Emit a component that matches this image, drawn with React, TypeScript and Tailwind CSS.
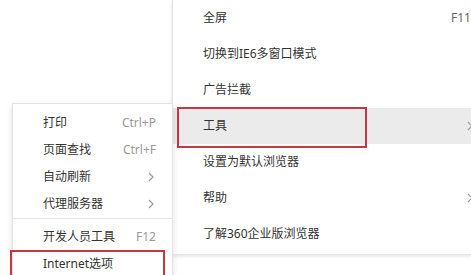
import React from "react";

const font = { fontFamily: '"Noto Sans", "Noto Sans CJK SC", sans-serif' };

function Chevron() {
  return (
    <svg width="6" height="10" viewBox="0 0 6 10" className="shrink-0">
      <polyline points="1,1 5,5 1,9" fill="none" stroke="#9a9a9a" strokeWidth="1.2" />
    </svg>
  );
}

type Item = { label: string; right?: string; arrow?: boolean; hover?: boolean; boxed?: boolean };

const mainItems: Item[] = [
  { label: "全屏", right: "F11" },
  { label: "切换到IE6多窗口模式" },
  { label: "广告拦截" },
  { label: "工具", arrow: true, hover: true, boxed: true },
  { label: "设置为默认浏览器" },
  { label: "帮助", arrow: true },
  { label: "了解360企业版浏览器" },
];

export default function App() {
  return (
    <div className="relative w-[471px] h-[275px] overflow-hidden bg-white text-[12px] text-[#333]" style={font}>
      {/* main menu */}
      <div className="absolute left-[172px] top-0 w-[320px] bg-white border-l border-[#e3e3e3] pb-[2px] shadow-[0_2px_4px_rgba(0,0,0,0.12)]">
        {mainItems.map((it) => (
          <div
            key={it.label}
            className={`relative flex items-center h-[36px] pl-[30px] pr-[24px] ${it.hover ? "bg-[#ebebeb]" : ""}`}
          >
            <span className="flex-1 leading-none">{it.label}</span>
            {it.right && <span className="text-[#666] leading-none mr-[-3px]">{it.right}</span>}
            {it.arrow && <span className="mr-[-5px] flex"><Chevron /></span>}
            {it.boxed && (
              <div className="absolute left-[4px] top-[-1px] w-[190px] h-[41px] border-2 border-[#c63740]" />
            )}
          </div>
        ))}
      </div>

      {/* submenu */}
      <div className="absolute left-[12px] top-[103px] w-[161px] bg-white border border-[#e3e3e3] pt-[5px] shadow-[0_2px_6px_rgba(0,0,0,0.12)]">
        {[
          { label: "打印", right: "Ctrl+P" },
          { label: "页面查找", right: "Ctrl+F" },
          { label: "自动刷新", arrow: true },
          { label: "代理服务器", arrow: true },
        ].map((it: Item) => (
          <div key={it.label} className="flex items-center h-[27px] pl-[30px] pr-[16px]">
            <span className="flex-1 leading-none">{it.label}</span>
            {it.right && <span className="text-[#999] leading-none">{it.right}</span>}
            {it.arrow && <span className="mr-[2px] flex"><Chevron /></span>}
          </div>
        ))}
        <div className="mt-[1px] mb-[4px] h-px bg-[#e6e6e6]" />
        <div className="flex items-center h-[27px] pl-[30px] pr-[16px]">
          <span className="flex-1 leading-none">开发人员工具</span>
          <span className="text-[#999] leading-none">F12</span>
        </div>
        <div className="relative flex items-center h-[27px] pl-[30px] pr-[16px]">
          <span className="flex-1 leading-none">Internet选项</span>
          <div className="absolute left-[-3px] top-[0px] w-[155px] h-[40px] border-2 border-[#c63740]" />
        </div>
      </div>
    </div>
  );
}
